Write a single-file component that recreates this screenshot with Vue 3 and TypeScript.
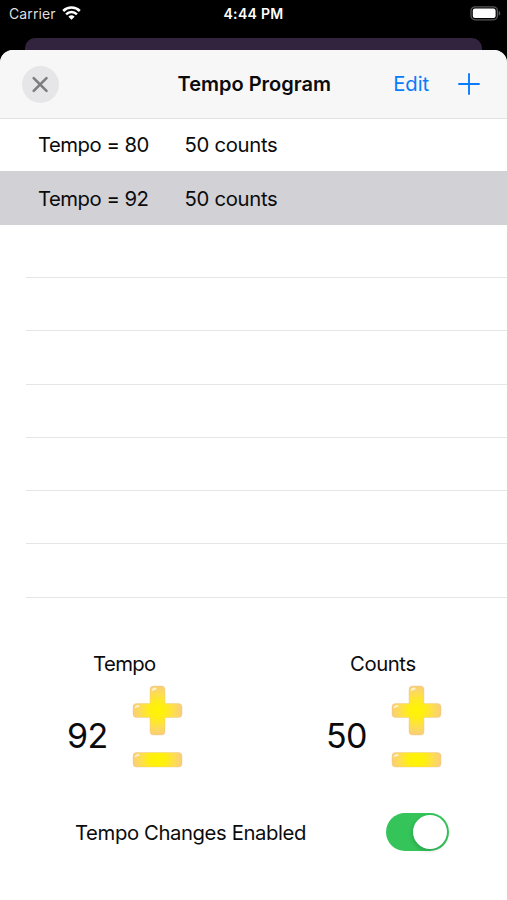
<script setup lang="ts">
import { computed, ref } from 'vue'

interface Step {
  tempo: number
  counts: number
}

type Field = keyof Step

const steps = ref<Step[]>([
  { tempo: 80, counts: 50 },
  { tempo: 92, counts: 50 },
])
const selected = ref(1)
const enabled = ref(true)
const visibleRows = 9

const emptyRows = computed(() => Math.max(0, visibleRows - steps.value.length))
const fields: { key: Field; label: string }[] = [
  { key: 'tempo', label: 'Tempo' },
  { key: 'counts', label: 'Counts' },
]

function change(key: Field, by: number) {
  steps.value[selected.value][key] += by
}

function addStep() {
  steps.value.push({ ...steps.value[selected.value] })
}
</script>

<template>
  <div class="screen">
    <div class="status">
      <div class="carrier">
        <span>Carrier</span>
        <svg class="wifi" width="19" height="14" viewBox="0 0 19 14">
          <path d="M1.2 5a11.8 11.8 0 0 1 16.6 0M4.1 8.3a7.7 7.7 0 0 1 10.8 0" fill="none" stroke="#fff" stroke-width="2.5" />
          <path d="M9.5 13.8 6.4 10.7a4.5 4.5 0 0 1 6.2 0Z" fill="#fff" />
        </svg>
      </div>
      <span class="clock">4:44 PM</span>
      <svg class="battery" width="31" height="15" viewBox="0 0 31 15">
        <rect x="1" y="0.8" width="26.4" height="13" rx="4" fill="none" stroke="#58585b" stroke-width="1.3" />
        <rect x="2.8" y="2.6" width="22.8" height="9.4" rx="2.1" fill="#fff" />
        <path d="M28.7 5v4.6c1.1-.4 1.6-1.2 1.6-2.3s-.5-1.9-1.6-2.3Z" fill="#58585b" />
      </svg>
    </div>

    <div class="behind"></div>

    <main class="sheet">
      <header class="bar">
        <button class="close" aria-label="Close">
          <svg width="37" height="37" viewBox="0 0 37 37">
            <path d="m11.7 12.1 12.8 12.8m0-12.8L11.7 24.9" stroke="#7d7d81" stroke-width="2.6" stroke-linecap="round" />
          </svg>
        </button>
        <h1 class="title">Tempo Program</h1>
        <div class="actions">
          <button class="edit">Edit</button>
          <button class="add" aria-label="Add" @click="addStep">
            <svg width="22" height="22" viewBox="0 0 22 22">
              <path d="M11 1v20M1 11h20" stroke="#0a7cfb" stroke-width="1.9" stroke-linecap="round" />
            </svg>
          </button>
        </div>
      </header>

      <ul class="list">
        <li
          v-for="(step, i) in steps"
          :key="i"
          class="row"
          :class="{ selected: i === selected }"
          @click="selected = i"
        >
          <span class="row-tempo">Tempo = {{ step.tempo }}</span>
          <span class="row-counts">{{ step.counts }} counts</span>
        </li>
        <li v-for="n in emptyRows" :key="'empty' + n" class="row empty"></li>
      </ul>

      <section class="editors">
        <div v-for="field in fields" :key="field.key" class="editor" :class="field.key">
          <h2 class="label">{{ field.label }}</h2>
          <div class="control">
            <span class="value">{{ steps[selected][field.key] }}</span>
            <div class="buttons">
              <button aria-label="Increase" @click="change(field.key, 1)">
                <svg width="51" height="51" viewBox="0 0 51 51">
                  <defs>
                    <radialGradient :id="'plus-' + field.key" gradientUnits="userSpaceOnUse" cx="25.5" cy="25.5" r="26">
                      <stop offset="0" stop-color="#fff500" />
                      <stop offset="0.3" stop-color="#ffee14" />
                      <stop offset="0.65" stop-color="#fddd52" />
                      <stop offset="1" stop-color="#f8cb80" />
                    </radialGradient>
                  </defs>
                  <path
                    d="M21.5 1h8a3.5 3.5 0 0 1 3.5 3.5V18.500H46.500a3.500 3.500 0 0 1 3.500 3.500v7a3.500 3.500 0 0 1-3.500 3.500H33V46.500a3.500 3.500 0 0 1-3.500 3.500h-8a3.500 3.500 0 0 1-3.500-3.500V32.500H4.500A3.500 3.500 0 0 1 1 29v-7a3.500 3.500 0 0 1 3.500-3.500H18V4.500A3.500 3.500 0 0 1 21.500 1Z"
                    :fill="`url(#plus-${field.key})`"
                    stroke="#eec487"
                    stroke-opacity="0.45"
                    stroke-width="0.9"
                  />
                  <path d="M19.5 6.5q.3-3.800 4-4l1.500 1.800-3.200 1ZM2.500 23.500q.3-3.300 4-3.500l1.500 1.600-3.200 1Z" fill="#fff" fill-opacity="0.7" />
                </svg>
              </button>
              <button aria-label="Decrease" @click="change(field.key, -1)">
                <svg width="51" height="17" viewBox="0 0 51 17">
                  <defs>
                    <radialGradient :id="'minus-' + field.key" gradientUnits="userSpaceOnUse" cx="25.5" cy="8.5" r="26">
                      <stop offset="0" stop-color="#fff500" />
                      <stop offset="0.35" stop-color="#ffee14" />
                      <stop offset="0.65" stop-color="#fddd52" />
                      <stop offset="1" stop-color="#f8cb80" />
                    </radialGradient>
                  </defs>
                  <rect
                    x="1" y="1.5" width="49" height="14.5" rx="3.5"
                    :fill="`url(#minus-${field.key})`"
                    stroke="#eec487"
                    stroke-opacity="0.45"
                    stroke-width="0.9"
                  />
                  <path d="M2.5 6.5q.3-3.300 4-3.500l1.500 1.600-3.200 1Z" fill="#fff" fill-opacity="0.7" />
                </svg>
              </button>
            </div>
          </div>
        </div>
      </section>

      <footer class="toggle-row">
        <span class="toggle-label">Tempo Changes Enabled</span>
        <button
          class="switch"
          :class="{ on: enabled }"
          role="switch"
          :aria-checked="enabled"
          @click="enabled = !enabled"
        >
          <span class="knob"></span>
        </button>
      </footer>
    </main>
  </div>
</template>

<style>
body {
  margin: 0;
  background: #000;
}
</style>

<style scoped>
.screen {
  width: 507px;
  height: 900px;
  overflow: hidden;
  display: flex;
  flex-direction: column;
  background: #000;
  color: #0b0b0c;
  font-family: Inter, 'Liberation Sans', sans-serif;
  font-size: 20.3px;
  letter-spacing: -0.4px;
}

button {
  display: block;
  margin: 0;
  padding: 0;
  border: 0;
  background: none;
  color: inherit;
  font: inherit;
}

svg {
  display: block;
}

.status {
  flex: none;
  box-sizing: border-box;
  height: 38px;
  padding: 0 6px 11px 9px;
  display: grid;
  grid-template-columns: 214.5px auto 1fr;
  align-items: center;
  color: #fff;
  font-size: 14px;
}

.carrier {
  display: flex;
  align-items: center;
  gap: 6px;
  color: #dededf;
  letter-spacing: 0.1px;
}

.wifi {
  margin-top: -1px;
}

.clock {
  font-weight: 600;
  letter-spacing: 0.3px;
}

.battery {
  justify-self: end;
}

.behind {
  flex: none;
  height: 12px;
  margin: 0 25px;
  border-radius: 10px 10px 0 0;
  background: #32233e;
}

.sheet {
  flex: 1;
  display: flex;
  flex-direction: column;
  border-radius: 13px 13px 0 0;
  overflow: hidden;
  background: #fff;
}

.bar {
  flex: none;
  box-sizing: border-box;
  height: 69px;
  padding: 0 27px 0 22px;
  display: grid;
  grid-template-columns: 155.5px auto 1fr;
  align-items: center;
  background: #f7f7f8;
  border-bottom: 1px solid #e2e2e4;
}

.close {
  width: 37px;
  height: 37px;
  border-radius: 50%;
  background: #e6e6e9;
}

.title {
  margin: 0;
  font-size: 20px;
  font-weight: 600;
  line-height: 24px;
  letter-spacing: 0;
}

.actions {
  display: flex;
  justify-content: flex-end;
  align-items: center;
  gap: 29px;
  color: #0a7cfb;
}

.edit {
  line-height: 24px;
  padding-bottom: 1px;
  letter-spacing: -0.1px;
}

.list {
  flex: none;
  margin: 0;
  padding: 0 0 0.7px;
  list-style: none;
}

.row {
  box-sizing: border-box;
  height: 53.3px;
  padding: 0 0 1px 38px;
  display: grid;
  grid-template-columns: 146.5px 1fr;
  align-items: center;
  white-space: nowrap;
}

.row:first-child {
  height: 52.4px;
}

.row-tempo {
  letter-spacing: -0.5px;
}

.row-counts {
  letter-spacing: -0.3px;
}

.row.selected {
  padding-bottom: 0;
  background: #d1d1d6;
}

.row.empty {
  margin-left: 26px;
  padding: 0;
  border-bottom: 1px solid #e6e6e8;
}

.editors {
  flex: none;
  display: grid;
  grid-template-columns: 259px 1fr;
  padding-top: 54px;
}

.label {
  margin: 0;
  padding-left: 93px;
  font-size: inherit;
  font-weight: 400;
  line-height: 24px;
  letter-spacing: -0.6px;
}

.counts .label {
  padding-left: 91px;
  letter-spacing: -0.4px;
}

.control {
  display: flex;
  align-items: center;
  padding: 9px 0 0 67px;
}

.value {
  width: 65px;
  padding-top: 18px;
  font-size: 34px;
  line-height: 40px;
  letter-spacing: -0.6px;
}

.buttons {
  display: flex;
  flex-direction: column;
  gap: 15px;
}

.toggle-row {
  display: flex;
  align-items: center;
  justify-content: space-between;
  padding: 45px 58px 0 75px;
}

.switch {
  box-sizing: border-box;
  width: 63px;
  height: 38px;
  padding: 2px;
  border-radius: 19px;
  display: flex;
  background: #e9e9eb;
}

.switch.on {
  justify-content: flex-end;
  background: #34c45a;
}

.knob {
  width: 34px;
  height: 34px;
  border-radius: 50%;
  background: #fff;
  box-shadow: -1px 2px 4px rgba(0, 0, 0, 0.16);
}
</style>
